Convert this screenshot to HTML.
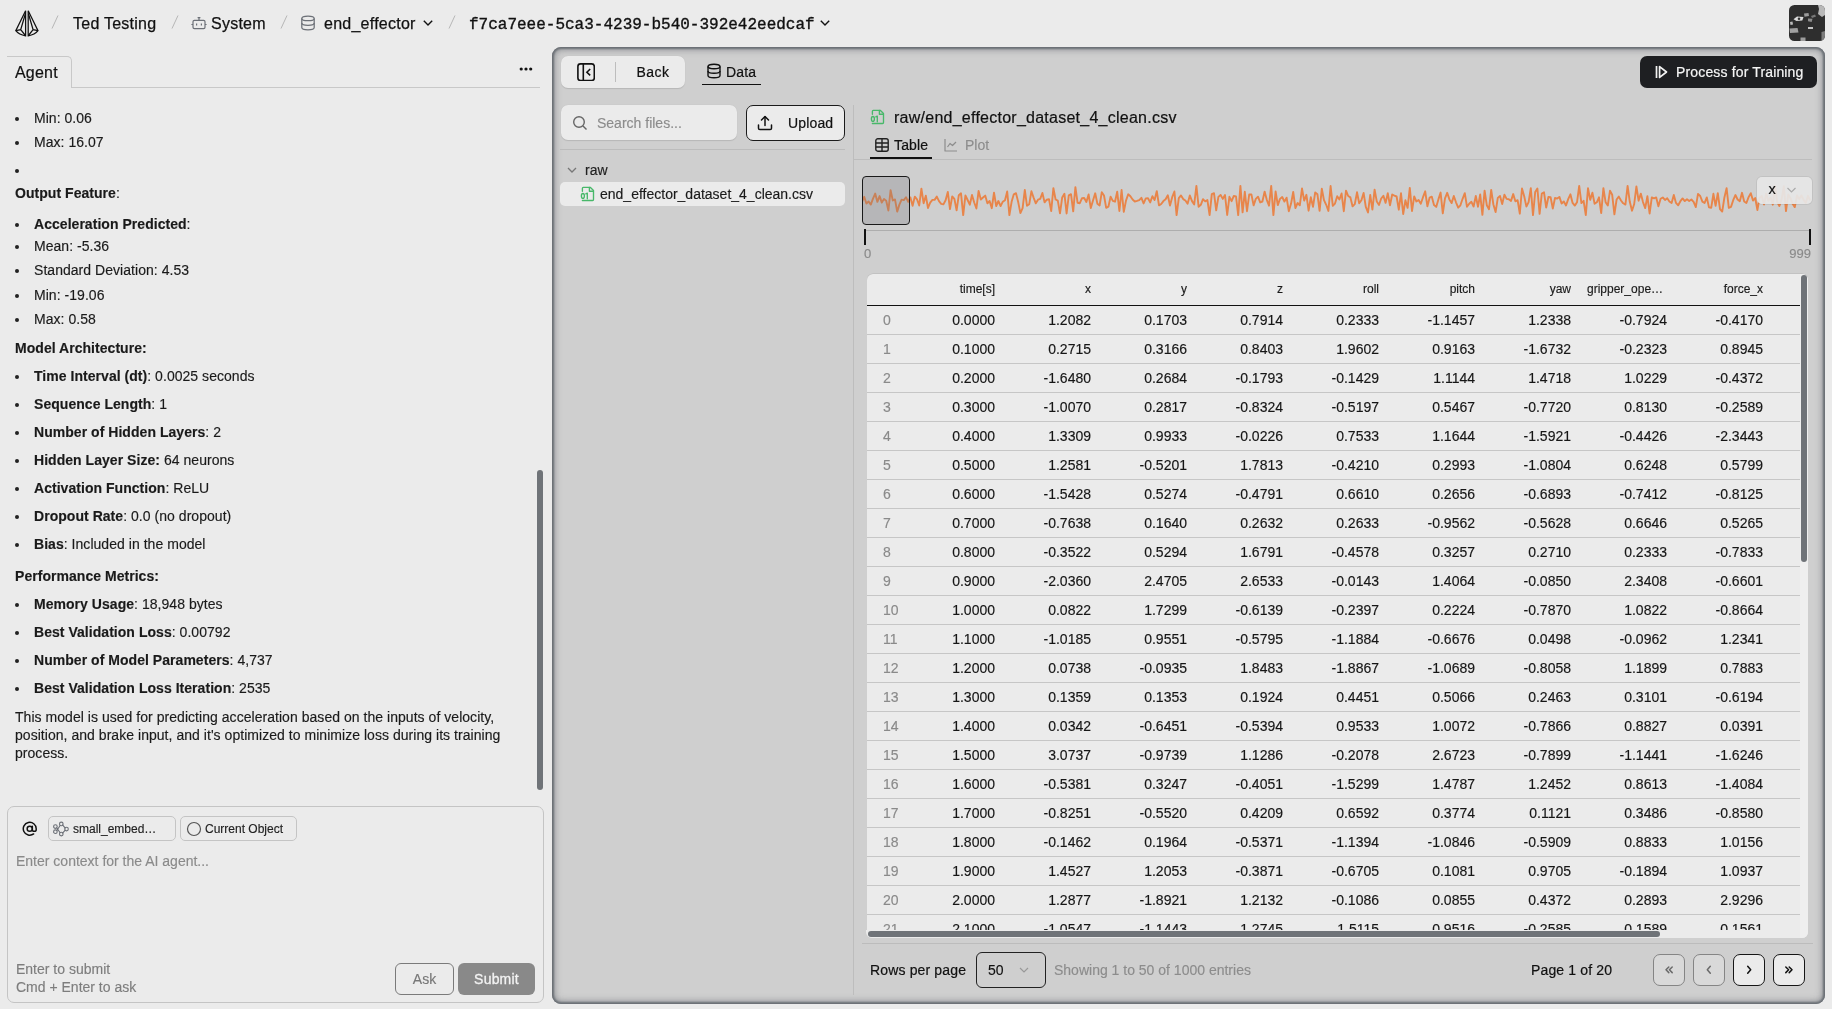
<!DOCTYPE html>
<html><head><meta charset="utf-8">
<style>
*{box-sizing:border-box;margin:0;padding:0}
html,body{width:1832px;height:1009px;overflow:hidden;background:#ebebeb;font-family:"Liberation Sans",sans-serif;color:#111;}
.abs{position:absolute}
.mono{font-family:"Liberation Mono",monospace}
/* top bar */
#top{position:absolute;left:0;top:0;width:1832px;height:47px}
.crumb{position:absolute;top:14px;font-size:16px;line-height:20px;color:#111;white-space:nowrap}
.slash{position:absolute;top:13px;font-size:16px;line-height:20px;color:#bbb}
.med{letter-spacing:0.25px;-webkit-text-stroke:0.25px currentColor}
/* left panel */
#left{position:absolute;left:0;top:47px;width:552px;height:962px}
#agentTab{position:absolute;left:7px;top:8.5px;width:65px;height:32px;border-top:1px solid #c8c8c8;border-right:1px solid #c8c8c8;border-radius:0 5px 0 0;background:#ebebeb}
#agentTab span{position:absolute;left:8px;top:6px;font-size:16px;line-height:20px;letter-spacing:0.2px;-webkit-text-stroke:0.2px #111}
#tabLine{position:absolute;left:71px;top:40px;width:469px;height:1px;background:#c8c8c8}
#content{position:absolute;left:0;top:47px;width:540px;font-size:14px;line-height:20px;color:#1a1a1a;letter-spacing:0.04px}
.li{position:absolute;left:34px;white-space:nowrap}
.li:before{content:"";position:absolute;left:-19px;top:9px;width:4px;height:4px;border-radius:50%;background:#222}
.p{position:absolute;left:15px;white-space:nowrap}
b{font-weight:700}
#chat{position:absolute;left:7px;top:759px;width:537px;height:197px;border:1px solid #c4c4c4;border-radius:7px}
.chip{position:absolute;top:9px;height:25px;border:1px solid #c4c4c4;border-radius:5px}
.chip span{position:absolute;top:5px;font-size:12px;line-height:14px;color:#222;white-space:nowrap}
/* right panel */
#right{position:absolute;left:552px;top:47px;width:1273px;height:957px;border-radius:9px;background:#cfcfcf;box-shadow:inset 0 0 0 1px rgba(100,105,112,.6),inset 0 0 0 2px rgba(100,105,112,.5),inset 0 0 0 3px rgba(100,105,112,.2),inset 0 0 5px 3px rgba(100,105,112,.4),inset 0 0 10px 1px rgba(80,84,90,.3)}
.t14m{font-size:14px;line-height:20px;color:#111;white-space:nowrap;letter-spacing:0.15px;-webkit-text-stroke:0.2px currentColor}
#tbl{background:#ebebeb;border-radius:6px;overflow:hidden;box-shadow:0 -0.5px 0.5px rgba(0,0,0,.12)}
.hd{font-size:12px;line-height:16px;color:#1a1a1a;white-space:nowrap}
.ix{font-size:14px;line-height:20px;color:#8a8a8a}
.cv{font-size:14px;line-height:20px;color:#161616;white-space:nowrap}
</style></head><body><div id="wrap" style="position:absolute;left:0;top:0;width:1832px;height:1009px;will-change:transform;-webkit-text-stroke-width:0.15px">
<div id="top">
  <svg class="abs" style="left:10px;top:6px" width="36" height="36" viewBox="0 0 36 36">
    <g fill="none" stroke="#111" stroke-width="1.25" stroke-linejoin="miter">
      <path d="M15.6 4.8 L5.8 24.6 Q9 28.6 15.6 29.8 Z"/>
      <path d="M15.3 8 L10.7 23.6 L5.8 24.6 M10.7 23.6 L15.4 29.5"/>
      <path d="M18.2 4.8 L28 24.6 Q24.8 28.6 18.2 29.8 Z"/>
      <path d="M18.5 8 L23.1 23.6 L28 24.6 M23.1 23.6 L18.4 29.5"/>
    </g>
  </svg>
  <svg class="abs" style="left:50px;top:14px" width="10" height="16" viewBox="0 0 10 16"><path d="M2 14.5L8 1.5" stroke="#b0b0b0" stroke-width="0.9"/></svg>
  <span class="crumb med" style="left:73px">Ted Testing</span>
  <svg class="abs" style="left:170px;top:14px" width="10" height="16" viewBox="0 0 10 16"><path d="M2 14.5L8 1.5" stroke="#b0b0b0" stroke-width="0.9"/></svg>
  <svg class="abs" style="left:190px;top:15px" width="18" height="16" viewBox="0 0 18 16"><g fill="none" stroke="#6c7077" stroke-width="1.2" stroke-linejoin="round"><rect x="3" y="5.4" width="12" height="8.2" rx="1.4"/><path d="M9 5.4V2.6M7.6 2.6h2.8"/><path d="M1.4 9.5h1.6M15 9.5h1.6"/><path d="M6.6 8.4v2.1M11.4 8.4v2.1"/></g></svg>
  <span class="crumb med" style="left:211px">System</span>
  <svg class="abs" style="left:279px;top:14px" width="10" height="16" viewBox="0 0 10 16"><path d="M2 14.5L8 1.5" stroke="#b0b0b0" stroke-width="0.9"/></svg>
  <svg class="abs" style="left:300px;top:15px" width="16" height="16" viewBox="0 0 16 16"><g fill="none" stroke="#6c7077" stroke-width="1.25"><ellipse cx="8" cy="3.4" rx="6.2" ry="2.3"/><path d="M1.8 3.4v9.2c0 1.3 2.8 2.3 6.2 2.3s6.2-1 6.2-2.3V3.4"/><path d="M1.8 8c0 1.3 2.8 2.3 6.2 2.3s6.2-1 6.2-2.3"/></g></svg>
  <span class="crumb med" style="left:324px">end_effector</span>
  <svg class="abs" style="left:422px;top:19px" width="12" height="8" viewBox="0 0 12 8"><path d="M1.8 1.8L6 6l4.2-4.2" fill="none" stroke="#111" stroke-width="1.4"/></svg>
  <svg class="abs" style="left:447px;top:14px" width="10" height="16" viewBox="0 0 10 16"><path d="M2 14.5L8 1.5" stroke="#b0b0b0" stroke-width="0.9"/></svg>
  <span class="crumb mono" style="left:469px;top:15px;-webkit-text-stroke:0.35px #111">f7ca7eee-5ca3-4239-b540-392e42eedcaf</span>
  <svg class="abs" style="left:819px;top:19px" width="12" height="8" viewBox="0 0 12 8"><path d="M1.8 1.8L6 6l4.2-4.2" fill="none" stroke="#111" stroke-width="1.4"/></svg>
  <svg class="abs" style="left:1789px;top:5px" width="36" height="36" viewBox="0 0 36 36">
    <defs><clipPath id="av"><rect x="0" y="0" width="36" height="36" rx="5.5"/></clipPath></defs>
    <g clip-path="url(#av)">
      <rect width="36" height="36" fill="#2e2e2e"/>
      <path d="M29 0h7v10l-3 2-4-3 1-5z" fill="#b8b8b8"/>
      <path d="M4.5 14.2l3.5-2.6 6.5 0.4-1.2 3.6-5.8 0.4z" fill="#dcdcdc"/>
      <circle cx="10" cy="13.8" r="1.3" fill="#333"/>
      <path d="M15 8.5l4.5-0.5 0.5 3-4.5 0.8z" fill="#9a9a9a"/>
      <path d="M19 13.5l4.5 0.3-0.8 3.2-3.7-0.8z" fill="#8c8c8c"/>
      <path d="M19 22h5v2h-5z" fill="#c4c4c4"/>
      <path d="M0.5 23.5l8-0.5 1 4.5-8.5 0.5z" fill="#a0a0a0"/>
      <path d="M11.5 32.5h5v3.5h-5z" fill="#9c9c9c"/>
      <path d="M32.5 27l3.5-1v10h-3.5z" fill="#7c7c7c"/>
      <path d="M1 17l2.5-0.5 0.5 3-2.5 0.5z" fill="#bdbdbd"/>
      <path d="M22 11l4-1.5 1 2-4 1.5z" fill="#777"/>
    </g>
  </svg>
</div>

<div id="left">
  <div id="agentTab"><span>Agent</span></div>
  <div id="tabLine"></div>
  <svg class="abs" style="left:517px;top:19px" width="18" height="6" viewBox="0 0 18 6"><g fill="#111"><circle cx="4.2" cy="3" r="1.6"/><circle cx="9" cy="3" r="1.6"/><circle cx="13.7" cy="3" r="1.6"/></g></svg>
  
  <div class="abs" style="left:537px;top:423px;width:6px;height:320px;border-radius:3px;background:#6f7378"></div>
  <div id="chat">
    <svg class="abs" style="left:14.2px;top:14px" width="15.5" height="15.5" viewBox="0 0 24 24"><g fill="none" stroke="#111" stroke-width="2.3" stroke-linecap="round" stroke-linejoin="round"><circle cx="12" cy="12" r="4"/><path d="M16 8v5a3 3 0 0 0 6 0v-1a10 10 0 1 0-4 8"/></g></svg>
    <div class="chip" style="left:40px;width:128px"><svg class="abs" style="left:3px;top:3px" width="17" height="17" viewBox="0 0 17 17"><g fill="none" stroke="#6c7077" stroke-width="1.1"><path d="M4.5 7.5L8.3 13M4.5 11L8.3 5.2M10.3 4.6l3.2 3.8M10.3 13.4l3.2-3.6"/><circle cx="9.3" cy="3.9" r="1.8"/><circle cx="14.5" cy="9.1" r="1.8"/><circle cx="9.3" cy="14.1" r="1.8"/><circle cx="3.4" cy="6.6" r="1.8"/><circle cx="3.4" cy="11.7" r="1.8"/></g></svg><span style="left:24px">small_embed…</span></div>
    <div class="chip" style="left:172px;width:117px"><svg class="abs" style="left:5px;top:4px" width="16" height="16" viewBox="0 0 16 16"><circle cx="8" cy="8" r="6.5" fill="none" stroke="#555" stroke-width="1.2"/></svg><span style="left:24px">Current Object</span></div>
    <div class="abs" style="left:8px;top:44px;font-size:14px;line-height:20px;color:#8a8a8a">Enter context for the AI agent...</div>
    <div class="abs" style="left:8px;top:153px;font-size:14px;line-height:18px;color:#7d7d7d">Enter to submit<br>Cmd + Enter to ask</div>
    <div class="abs" style="left:387px;top:156px;width:59px;height:32px;border:1px solid #7a7a7a;border-radius:6px;font-size:14px;line-height:30px;text-align:center;color:#777">Ask</div>
    <div class="abs" style="left:450px;top:156px;width:77px;height:32px;border-radius:6px;background:#898989;font-size:14px;line-height:32px;text-align:center;color:#f3f3f3;letter-spacing:0.2px;-webkit-text-stroke:0.3px #f3f3f3">Submit</div>
  </div>
<div id="content">
<div class="li" style="top:14px">Min: 0.06</div>
<div class="li" style="top:38px">Max: 16.07</div>
<div class="li" style="top:66px"></div>
<div class="p" style="top:89px"><b>Output Feature</b>:</div>
<div class="li" style="top:120px"><b>Acceleration Predicted</b>:</div>
<div class="li" style="top:142px">Mean: -5.36</div>
<div class="li" style="top:166px">Standard Deviation: 4.53</div>
<div class="li" style="top:190.5px">Min: -19.06</div>
<div class="li" style="top:214.5px">Max: 0.58</div>
<div class="p" style="top:244px"><b>Model Architecture:</b></div>
<div class="li" style="top:272px"><b>Time Interval (dt)</b>: 0.0025 seconds</div>
<div class="li" style="top:300px"><b>Sequence Length</b>: 1</div>
<div class="li" style="top:328px"><b>Number of Hidden Layers</b>: 2</div>
<div class="li" style="top:356px"><b>Hidden Layer Size:</b> 64 neurons</div>
<div class="li" style="top:384px"><b>Activation Function</b>: ReLU</div>
<div class="li" style="top:412px"><b>Dropout Rate</b>: 0.0 (no dropout)</div>
<div class="li" style="top:440px"><b>Bias</b>: Included in the model</div>
<div class="p" style="top:472px"><b>Performance Metrics:</b></div>
<div class="li" style="top:500px"><b>Memory Usage</b>: 18,948 bytes</div>
<div class="li" style="top:528px"><b>Best Validation Loss</b>: 0.00792</div>
<div class="li" style="top:556px"><b>Number of Model Parameters</b>: 4,737</div>
<div class="li" style="top:584px"><b>Best Validation Loss Iteration</b>: 2535</div>
<div class="p" style="top:613px">This model is used for predicting acceleration based on the inputs of velocity,</div>
<div class="p" style="top:631px">position, and brake input, and it's optimized to minimize loss during its training</div>
<div class="p" style="top:649px">process.</div>
  </div>
</div>

<div id="right">
<div class="abs" style="left:9px;top:9px;width:124px;height:32px;border-radius:7px;background:#ebebeb;box-shadow:0 0.5px 1px rgba(0,0,0,.12)"></div>
<svg class="abs" style="left:25px;top:16px" width="18" height="18" viewBox="0 0 18 18"><g fill="none" stroke="#111" stroke-width="1.6"><rect x="0.9" y="0.9" width="16.4" height="16.6" rx="2.6"/><path d="M6.3 1v16.4"/><path d="M13.2 6L9.9 9.2l3.3 3.2"/></g></svg>
<div class="abs" style="left:63px;top:15px;width:1px;height:20px;background:#bdbdbd"></div>
<div class="abs t14m" style="left:84.5px;top:15px;letter-spacing:0.45px">Back</div>
<svg class="abs" style="left:154px;top:16px" width="16" height="16" viewBox="0 0 16 16"><g fill="none" stroke="#111" stroke-width="1.4"><ellipse cx="8" cy="3.5" rx="6" ry="2.3"/><path d="M2 3.5v9c0 1.3 2.7 2.3 6 2.3s6-1 6-2.3v-9"/><path d="M2 8c0 1.3 2.7 2.3 6 2.3s6-1 6-2.3"/></g></svg>
<div class="abs t14m" style="left:174px;top:15px">Data</div>
<div class="abs" style="left:150px;top:36.599999999999994px;width:59px;height:1.3px;background:#111"></div>
<div class="abs" style="left:1088px;top:9px;width:177px;height:32px;border-radius:7px;background:#1e1f22"></div>
<svg class="abs" style="left:1103px;top:18px" width="13" height="14" viewBox="0 0 13 14"><g fill="none" stroke="#f2f2f2" stroke-width="1.7" stroke-linejoin="round"><path d="M1.5 1v12"/><path d="M4.6 1.6L11.5 7L4.6 12.4Z"/></g></svg>
<div class="abs t14m" style="left:1124px;top:15px;color:#f5f5f5">Process for Training</div>

<div class="abs" style="left:9px;top:58px;width:176px;height:35px;border-radius:7px;background:#ebebeb;box-shadow:0 0.5px 1px rgba(0,0,0,.12)"></div>
<svg class="abs" style="left:20px;top:68px" width="16" height="16" viewBox="0 0 16 16"><g fill="none" stroke="#666" stroke-width="1.4"><circle cx="7" cy="7" r="5.3"/><path d="M11 11l3.5 3.5"/></g></svg>
<div class="abs" style="left:45px;top:66px;font-size:14px;line-height:20px;color:#8c8c8c">Search files...</div>
<div class="abs" style="left:194px;top:58px;width:99px;height:36px;border-radius:7px;border:1px solid #1b1b1b;background:#ebebeb"></div>
<svg class="abs" style="left:205px;top:68px" width="16" height="16" viewBox="0 0 16 16"><g fill="none" stroke="#111" stroke-width="1.5" stroke-linecap="round" stroke-linejoin="round"><path d="M1.5 10v3.2c0 .8.6 1.3 1.3 1.3h10.4c.7 0 1.3-.5 1.3-1.3V10"/><path d="M8 10.5V1.8"/><path d="M4.5 5L8 1.5L11.5 5"/></g></svg>
<div class="abs t14m" style="left:236px;top:66px">Upload</div>
<div class="abs" style="left:8px;top:102px;width:285px;height:1px;background:#bcbcbc"></div>
<svg class="abs" style="left:14px;top:118px" width="12" height="10" viewBox="0 0 12 10"><path d="M2 3l4 4 4-4" fill="none" stroke="#777" stroke-width="1.3"/></svg>
<div class="abs" style="left:33px;top:113px;font-size:14px;line-height:20px;color:#222">raw</div>
<div class="abs" style="left:8px;top:135px;width:285px;height:24px;border-radius:5px;background:#ebebeb"></div>

<svg class="abs" style="left:28px;top:139px" width="15" height="16" viewBox="0 0 15 16"><g fill="none" stroke="#48b86a" stroke-width="1.35" stroke-linejoin="round" stroke-linecap="round"><path d="M2.4 5.2V2.2c0-.5.4-.9.9-.9h6.9l3.3 3.3v9c0 .5-.4.9-.9.9H2.4"/><path d="M9.4 1.4v3.8h3.9"/><ellipse cx="2.9" cy="9.9" rx="1.5" ry="2.4"/><path d="M5.8 7.9l1.5-.8v5.6"/></g></svg>
<div class="abs" style="left:48px;top:137px;font-size:14px;line-height:20px;color:#1a1a1a">end_effector_dataset_4_clean.csv</div>
<div class="abs" style="left:301px;top:58px;width:1px;height:890px;background:#bdbdbd"></div>
<svg class="abs" style="left:318px;top:62px" width="15" height="16" viewBox="0 0 15 16"><g fill="none" stroke="#48b86a" stroke-width="1.35" stroke-linejoin="round" stroke-linecap="round"><path d="M2.4 5.2V2.2c0-.5.4-.9.9-.9h6.9l3.3 3.3v9c0 .5-.4.9-.9.9H2.4"/><path d="M9.4 1.4v3.8h3.9"/><ellipse cx="2.9" cy="9.9" rx="1.5" ry="2.4"/><path d="M5.8 7.9l1.5-.8v5.6"/></g></svg>
<div class="abs" style="left:342px;top:61px;font-size:16px;line-height:20px;color:#111;letter-spacing:0.25px;-webkit-text-stroke:0.2px #111">raw/end_effector_dataset_4_clean.csv</div>
<svg class="abs" style="left:323px;top:91px" width="14" height="14" viewBox="0 0 14 14"><g fill="none" stroke="#222" stroke-width="1.4"><rect x="0.8" y="0.8" width="12.4" height="12.4" rx="2"/><path d="M0.8 5h12.4M0.8 9h12.4M7 0.8v12.4"/></g></svg>
<div class="abs t14m" style="left:342px;top:88px">Table</div>
<svg class="abs" style="left:392px;top:91px" width="14" height="14" viewBox="0 0 14 14"><g fill="none" stroke="#8d8d8d" stroke-width="1.2" stroke-linejoin="round"><path d="M1 1v12h12"/><path d="M3.5 9L6 5.5l2.5 2L12 4"/></g></svg>
<div class="abs" style="left:413px;top:88px;font-size:14px;line-height:20px;color:#8d8d8d">Plot</div>
<div class="abs" style="left:318px;top:110.30000000000001px;width:62px;height:1.7px;background:#111"></div>
<div class="abs" style="left:302px;top:112px;width:958px;height:1px;background:#bdbdbd"></div>

<svg class="abs" style="left:310px;top:123px" width="950" height="60" viewBox="0 0 950 60"><path d="M0.0 31.9 L2.2 26.8 L4.4 33.5 L6.6 31.5 L8.8 34.6 L11.0 28.6 L13.2 23.6 L15.4 31.9 L17.6 26.1 L19.8 32.6 L22.0 29.1 L24.2 30.8 L26.4 40.5 L28.6 20.1 L30.8 30.5 L33.0 29.4 L35.2 41.6 L37.4 34.6 L39.6 29.6 L41.8 30.1 L44.0 27.2 L46.2 31.8 L48.4 27.4 L50.6 35.8 L52.8 26.6 L55.0 29.3 L57.2 35.5 L59.4 18.7 L61.6 33.2 L63.8 25.7 L66.0 38.0 L68.2 32.6 L70.4 29.9 L72.6 29.9 L74.8 26.6 L77.0 31.2 L79.2 33.8 L81.4 34.4 L83.6 30.2 L85.8 21.9 L88.0 39.1 L90.2 26.4 L92.4 28.9 L94.6 40.3 L96.8 25.2 L99.0 23.3 L101.2 45.1 L103.4 25.5 L105.6 30.0 L107.8 34.7 L110.0 25.0 L112.2 32.5 L114.4 38.5 L116.6 20.9 L118.8 29.5 L121.0 27.5 L123.2 25.6 L125.4 33.3 L127.6 31.0 L129.8 38.2 L132.0 22.7 L134.2 36.0 L136.4 31.0 L138.6 36.1 L140.8 31.7 L143.0 30.2 L145.2 21.5 L147.4 45.1 L149.6 31.8 L151.8 24.3 L154.0 23.2 L156.2 32.1 L158.4 43.1 L160.6 38.2 L162.8 20.0 L165.0 35.8 L167.2 34.3 L169.4 21.3 L171.6 27.6 L173.8 33.3 L176.0 29.7 L178.2 28.9 L180.4 23.0 L182.6 32.4 L184.8 29.7 L187.0 29.2 L189.2 41.1 L191.4 18.1 L193.6 29.5 L195.8 30.7 L198.0 43.3 L200.2 27.4 L202.4 23.7 L204.6 43.5 L206.8 25.4 L209.0 24.2 L211.2 41.3 L213.4 17.1 L215.6 32.8 L217.8 33.2 L220.0 28.2 L222.2 28.0 L224.4 32.0 L226.6 24.5 L228.8 38.1 L231.0 30.6 L233.2 23.3 L235.4 33.8 L237.6 35.5 L239.8 22.2 L242.0 25.5 L244.2 37.9 L246.4 36.7 L248.6 26.6 L250.8 30.9 L253.0 31.7 L255.2 21.6 L257.4 41.0 L259.6 20.0 L261.8 41.8 L264.0 30.6 L266.2 24.3 L268.4 26.3 L270.6 29.5 L272.8 31.5 L275.0 30.9 L277.2 30.1 L279.4 27.8 L281.6 33.4 L283.8 28.4 L286.0 28.2 L288.2 32.4 L290.4 26.2 L292.6 29.9 L294.8 21.1 L297.0 35.4 L299.2 34.0 L301.4 31.1 L303.6 29.3 L305.8 25.3 L308.0 35.5 L310.2 27.2 L312.4 21.5 L314.6 45.1 L316.8 28.2 L319.0 25.4 L321.2 29.1 L323.4 30.5 L325.6 33.7 L327.8 25.4 L330.0 31.1 L332.2 34.4 L334.4 15.9 L336.6 36.7 L338.8 34.8 L341.0 29.2 L343.2 31.4 L345.4 30.1 L347.6 45.1 L349.8 24.1 L352.0 23.2 L354.2 40.4 L356.4 26.9 L358.6 24.9 L360.8 28.9 L363.0 25.0 L365.2 45.0 L367.4 26.8 L369.6 31.2 L371.8 25.9 L374.0 26.5 L376.2 45.1 L378.4 15.9 L380.6 42.3 L382.8 21.8 L385.0 41.2 L387.2 24.5 L389.4 24.4 L391.6 35.4 L393.8 28.9 L396.0 26.7 L398.2 32.4 L400.4 31.5 L402.6 21.6 L404.8 29.8 L407.0 35.7 L409.2 15.9 L411.4 45.1 L413.6 21.5 L415.8 35.1 L418.0 28.9 L420.2 27.0 L422.4 31.6 L424.6 27.7 L426.8 41.2 L429.0 33.8 L431.2 22.0 L433.4 38.0 L435.6 33.0 L437.8 35.3 L440.0 18.5 L442.2 30.6 L444.4 24.8 L446.6 40.7 L448.8 27.3 L451.0 36.9 L453.2 22.4 L455.4 24.2 L457.6 40.8 L459.8 18.8 L462.0 30.2 L464.2 34.8 L466.4 40.9 L468.6 16.0 L470.8 35.8 L473.0 33.6 L475.2 26.2 L477.4 29.5 L479.6 23.5 L481.8 41.2 L484.0 20.7 L486.2 26.0 L488.4 27.4 L490.6 36.4 L492.8 34.1 L495.0 22.3 L497.2 33.3 L499.4 30.2 L501.6 22.9 L503.8 36.8 L506.0 42.5 L508.2 25.0 L510.4 39.6 L512.6 19.7 L514.8 31.5 L517.0 35.0 L519.2 28.5 L521.4 25.8 L523.6 32.9 L525.8 23.3 L528.0 35.3 L530.2 24.5 L532.4 25.6 L534.6 26.5 L536.8 39.7 L539.0 23.3 L541.2 44.0 L543.4 30.3 L545.6 37.9 L547.8 17.9 L550.0 41.0 L552.2 26.4 L554.4 31.5 L556.6 30.0 L558.8 33.7 L561.0 27.2 L563.2 21.3 L565.4 36.3 L567.6 27.7 L569.8 26.7 L572.0 35.0 L574.2 36.9 L576.4 29.4 L578.6 22.6 L580.8 43.3 L583.0 28.3 L585.2 22.8 L587.4 29.4 L589.6 33.1 L591.8 26.0 L594.0 32.3 L596.2 37.7 L598.4 35.3 L600.6 28.8 L602.8 23.2 L605.0 36.8 L607.2 33.7 L609.4 31.8 L611.6 36.5 L613.8 26.0 L616.0 36.7 L618.2 24.5 L620.4 44.9 L622.6 20.7 L624.8 35.2 L627.0 39.2 L629.2 19.9 L631.4 34.5 L633.6 42.1 L635.8 27.9 L638.0 25.9 L640.2 34.0 L642.4 24.6 L644.6 28.9 L646.8 29.3 L649.0 30.9 L651.2 24.1 L653.4 31.3 L655.6 30.2 L657.8 43.7 L660.0 18.5 L662.2 26.2 L664.4 36.6 L666.6 32.1 L668.8 18.1 L671.0 45.1 L673.2 22.0 L675.4 18.5 L677.6 43.8 L679.8 23.5 L682.0 22.3 L684.2 37.5 L686.4 27.0 L688.6 27.3 L690.8 38.6 L693.0 28.0 L695.2 28.6 L697.4 26.9 L699.6 33.5 L701.8 31.5 L704.0 35.5 L706.2 29.1 L708.4 24.3 L710.6 32.9 L712.8 35.6 L715.0 32.3 L717.2 15.9 L719.4 33.1 L721.6 30.8 L723.8 45.1 L726.0 18.3 L728.2 29.9 L730.4 22.7 L732.6 33.8 L734.8 32.3 L737.0 27.3 L739.2 43.1 L741.4 18.2 L743.6 32.2 L745.8 35.5 L748.0 20.7 L750.2 24.8 L752.4 44.4 L754.6 29.5 L756.8 26.6 L759.0 30.5 L761.2 33.3 L763.4 34.6 L765.6 15.9 L767.8 31.8 L770.0 40.7 L772.2 34.0 L774.4 16.4 L776.6 30.7 L778.8 23.6 L781.0 32.1 L783.2 38.1 L785.4 26.1 L787.6 43.5 L789.8 27.4 L792.0 28.3 L794.2 27.4 L796.4 36.3 L798.6 28.8 L800.8 27.5 L803.0 29.9 L805.2 28.2 L807.4 31.5 L809.6 33.0 L811.8 25.0 L814.0 32.9 L816.2 35.3 L818.4 31.2 L820.6 28.4 L822.8 31.1 L825.0 29.3 L827.2 31.0 L829.4 29.5 L831.6 31.8 L833.8 37.1 L836.0 23.9 L838.2 26.0 L840.4 31.6 L842.6 33.0 L844.8 27.4 L847.0 37.4 L849.2 37.9 L851.4 23.8 L853.6 35.9 L855.8 23.2 L858.0 39.1 L860.2 41.6 L862.4 27.5 L864.6 18.2 L866.8 37.9 L869.0 36.9 L871.2 30.2 L873.4 25.0 L875.6 29.5 L877.8 31.2 L880.0 22.8 L882.2 31.5 L884.4 33.0 L886.6 27.1 L888.8 23.2 L891.0 30.6 L893.2 28.0 L895.4 40.0 L897.6 27.7 L899.8 25.9 L902.0 34.6 L904.2 23.5 L906.4 30.8 L908.6 27.4 L910.8 34.7 L913.0 15.9 L915.2 32.1 L917.4 35.9 L919.6 29.3 L921.8 16.3 L924.0 41.1 L926.2 24.5 L928.4 27.9 L930.6 33.8 L932.8 37.1 L935.0 25.5 L937.2 29.1 L939.4 25.4 L941.6 29.9 L943.8 33.0 L946.0 25.8 L948.2 30.3" fill="none" stroke="#e8854a" stroke-width="1.9" stroke-linejoin="round"/></svg>
<div class="abs" style="left:310px;top:129px;width:48px;height:49px;border:1px solid #1a1a1a;border-radius:4px;background:rgba(120,120,125,.28)"></div>
<div class="abs" style="left:1205px;top:130px;width:55px;height:27px;border-radius:5px;background:rgba(230,230,230,.93);box-shadow:0 0 0 1px rgba(0,0,0,.06)"></div>
<div class="abs" style="left:1216.5px;top:134px;font-size:14.5px;line-height:16px;color:#111">x</div>
<svg class="abs" style="left:1234px;top:139px" width="11" height="8" viewBox="0 0 11 8"><path d="M1.5 2l4 4 4-4" fill="none" stroke="#aaa" stroke-width="1.2"/></svg>
<div class="abs" style="left:312px;top:183px;width:946px;height:1px;background:#aeaeae"></div>
<div class="abs" style="left:312px;top:182px;width:2px;height:16px;background:#111"></div>
<div class="abs" style="left:1257px;top:182px;width:2px;height:16px;background:#111"></div>
<div class="abs" style="left:312px;top:199px;font-size:13px;line-height:16px;color:#8a8a8a">0</div>
<div class="abs" style="right:14px;top:199px;font-size:13px;line-height:16px;color:#8a8a8a">999</div>

<div class="abs" id="tbl" style="left:315px;top:227px;width:941px;height:664px">
<div class="abs" style="left:0;top:0;width:933px;height:32px"></div>
<div class="abs hd" style="right:813px;top:6.5px">time[s]</div>
<div class="abs hd" style="right:717px;top:6.5px">x</div>
<div class="abs hd" style="right:621px;top:6.5px">y</div>
<div class="abs hd" style="right:525px;top:6.5px">z</div>
<div class="abs hd" style="right:429px;top:6.5px">roll</div>
<div class="abs hd" style="right:333px;top:6.5px">pitch</div>
<div class="abs hd" style="right:237px;top:6.5px">yaw</div>
<div class="abs hd" style="left:720px;top:6.5px">gripper_ope…</div>
<div class="abs hd" style="right:45px;top:6.5px">force_x</div>
<div class="abs" style="left:0;top:31px;width:933px;height:1.2px;background:#111"></div>
<div class="abs" style="left:0;top:60px;width:933px;height:1px;background:#c6c6c6"></div>
<div class="abs ix" style="left:16px;top:36px">0</div>
<div class="abs cv" style="right:813px;top:36px">0.0000</div>
<div class="abs cv" style="right:717px;top:36px">1.2082</div>
<div class="abs cv" style="right:621px;top:36px">0.1703</div>
<div class="abs cv" style="right:525px;top:36px">0.7914</div>
<div class="abs cv" style="right:429px;top:36px">0.2333</div>
<div class="abs cv" style="right:333px;top:36px">-1.1457</div>
<div class="abs cv" style="right:237px;top:36px">1.2338</div>
<div class="abs cv" style="right:141px;top:36px">-0.7924</div>
<div class="abs cv" style="right:45px;top:36px">-0.4170</div>
<div class="abs" style="left:0;top:89px;width:933px;height:1px;background:#c6c6c6"></div>
<div class="abs ix" style="left:16px;top:65px">1</div>
<div class="abs cv" style="right:813px;top:65px">0.1000</div>
<div class="abs cv" style="right:717px;top:65px">0.2715</div>
<div class="abs cv" style="right:621px;top:65px">0.3166</div>
<div class="abs cv" style="right:525px;top:65px">0.8403</div>
<div class="abs cv" style="right:429px;top:65px">1.9602</div>
<div class="abs cv" style="right:333px;top:65px">0.9163</div>
<div class="abs cv" style="right:237px;top:65px">-1.6732</div>
<div class="abs cv" style="right:141px;top:65px">-0.2323</div>
<div class="abs cv" style="right:45px;top:65px">0.8945</div>
<div class="abs" style="left:0;top:118px;width:933px;height:1px;background:#c6c6c6"></div>
<div class="abs ix" style="left:16px;top:94px">2</div>
<div class="abs cv" style="right:813px;top:94px">0.2000</div>
<div class="abs cv" style="right:717px;top:94px">-1.6480</div>
<div class="abs cv" style="right:621px;top:94px">0.2684</div>
<div class="abs cv" style="right:525px;top:94px">-0.1793</div>
<div class="abs cv" style="right:429px;top:94px">-0.1429</div>
<div class="abs cv" style="right:333px;top:94px">1.1144</div>
<div class="abs cv" style="right:237px;top:94px">1.4718</div>
<div class="abs cv" style="right:141px;top:94px">1.0229</div>
<div class="abs cv" style="right:45px;top:94px">-0.4372</div>
<div class="abs" style="left:0;top:147px;width:933px;height:1px;background:#c6c6c6"></div>
<div class="abs ix" style="left:16px;top:123px">3</div>
<div class="abs cv" style="right:813px;top:123px">0.3000</div>
<div class="abs cv" style="right:717px;top:123px">-1.0070</div>
<div class="abs cv" style="right:621px;top:123px">0.2817</div>
<div class="abs cv" style="right:525px;top:123px">-0.8324</div>
<div class="abs cv" style="right:429px;top:123px">-0.5197</div>
<div class="abs cv" style="right:333px;top:123px">0.5467</div>
<div class="abs cv" style="right:237px;top:123px">-0.7720</div>
<div class="abs cv" style="right:141px;top:123px">0.8130</div>
<div class="abs cv" style="right:45px;top:123px">-0.2589</div>
<div class="abs" style="left:0;top:176px;width:933px;height:1px;background:#c6c6c6"></div>
<div class="abs ix" style="left:16px;top:152px">4</div>
<div class="abs cv" style="right:813px;top:152px">0.4000</div>
<div class="abs cv" style="right:717px;top:152px">1.3309</div>
<div class="abs cv" style="right:621px;top:152px">0.9933</div>
<div class="abs cv" style="right:525px;top:152px">-0.0226</div>
<div class="abs cv" style="right:429px;top:152px">0.7533</div>
<div class="abs cv" style="right:333px;top:152px">1.1644</div>
<div class="abs cv" style="right:237px;top:152px">-1.5921</div>
<div class="abs cv" style="right:141px;top:152px">-0.4426</div>
<div class="abs cv" style="right:45px;top:152px">-2.3443</div>
<div class="abs" style="left:0;top:205px;width:933px;height:1px;background:#c6c6c6"></div>
<div class="abs ix" style="left:16px;top:181px">5</div>
<div class="abs cv" style="right:813px;top:181px">0.5000</div>
<div class="abs cv" style="right:717px;top:181px">1.2581</div>
<div class="abs cv" style="right:621px;top:181px">-0.5201</div>
<div class="abs cv" style="right:525px;top:181px">1.7813</div>
<div class="abs cv" style="right:429px;top:181px">-0.4210</div>
<div class="abs cv" style="right:333px;top:181px">0.2993</div>
<div class="abs cv" style="right:237px;top:181px">-1.0804</div>
<div class="abs cv" style="right:141px;top:181px">0.6248</div>
<div class="abs cv" style="right:45px;top:181px">0.5799</div>
<div class="abs" style="left:0;top:234px;width:933px;height:1px;background:#c6c6c6"></div>
<div class="abs ix" style="left:16px;top:210px">6</div>
<div class="abs cv" style="right:813px;top:210px">0.6000</div>
<div class="abs cv" style="right:717px;top:210px">-1.5428</div>
<div class="abs cv" style="right:621px;top:210px">0.5274</div>
<div class="abs cv" style="right:525px;top:210px">-0.4791</div>
<div class="abs cv" style="right:429px;top:210px">0.6610</div>
<div class="abs cv" style="right:333px;top:210px">0.2656</div>
<div class="abs cv" style="right:237px;top:210px">-0.6893</div>
<div class="abs cv" style="right:141px;top:210px">-0.7412</div>
<div class="abs cv" style="right:45px;top:210px">-0.8125</div>
<div class="abs" style="left:0;top:263px;width:933px;height:1px;background:#c6c6c6"></div>
<div class="abs ix" style="left:16px;top:239px">7</div>
<div class="abs cv" style="right:813px;top:239px">0.7000</div>
<div class="abs cv" style="right:717px;top:239px">-0.7638</div>
<div class="abs cv" style="right:621px;top:239px">0.1640</div>
<div class="abs cv" style="right:525px;top:239px">0.2632</div>
<div class="abs cv" style="right:429px;top:239px">0.2633</div>
<div class="abs cv" style="right:333px;top:239px">-0.9562</div>
<div class="abs cv" style="right:237px;top:239px">-0.5628</div>
<div class="abs cv" style="right:141px;top:239px">0.6646</div>
<div class="abs cv" style="right:45px;top:239px">0.5265</div>
<div class="abs" style="left:0;top:292px;width:933px;height:1px;background:#c6c6c6"></div>
<div class="abs ix" style="left:16px;top:268px">8</div>
<div class="abs cv" style="right:813px;top:268px">0.8000</div>
<div class="abs cv" style="right:717px;top:268px">-0.3522</div>
<div class="abs cv" style="right:621px;top:268px">0.5294</div>
<div class="abs cv" style="right:525px;top:268px">1.6791</div>
<div class="abs cv" style="right:429px;top:268px">-0.4578</div>
<div class="abs cv" style="right:333px;top:268px">0.3257</div>
<div class="abs cv" style="right:237px;top:268px">0.2710</div>
<div class="abs cv" style="right:141px;top:268px">0.2333</div>
<div class="abs cv" style="right:45px;top:268px">-0.7833</div>
<div class="abs" style="left:0;top:321px;width:933px;height:1px;background:#c6c6c6"></div>
<div class="abs ix" style="left:16px;top:297px">9</div>
<div class="abs cv" style="right:813px;top:297px">0.9000</div>
<div class="abs cv" style="right:717px;top:297px">-2.0360</div>
<div class="abs cv" style="right:621px;top:297px">2.4705</div>
<div class="abs cv" style="right:525px;top:297px">2.6533</div>
<div class="abs cv" style="right:429px;top:297px">-0.0143</div>
<div class="abs cv" style="right:333px;top:297px">1.4064</div>
<div class="abs cv" style="right:237px;top:297px">-0.0850</div>
<div class="abs cv" style="right:141px;top:297px">2.3408</div>
<div class="abs cv" style="right:45px;top:297px">-0.6601</div>
<div class="abs" style="left:0;top:350px;width:933px;height:1px;background:#c6c6c6"></div>
<div class="abs ix" style="left:16px;top:326px">10</div>
<div class="abs cv" style="right:813px;top:326px">1.0000</div>
<div class="abs cv" style="right:717px;top:326px">0.0822</div>
<div class="abs cv" style="right:621px;top:326px">1.7299</div>
<div class="abs cv" style="right:525px;top:326px">-0.6139</div>
<div class="abs cv" style="right:429px;top:326px">-0.2397</div>
<div class="abs cv" style="right:333px;top:326px">0.2224</div>
<div class="abs cv" style="right:237px;top:326px">-0.7870</div>
<div class="abs cv" style="right:141px;top:326px">1.0822</div>
<div class="abs cv" style="right:45px;top:326px">-0.8664</div>
<div class="abs" style="left:0;top:379px;width:933px;height:1px;background:#c6c6c6"></div>
<div class="abs ix" style="left:16px;top:355px">11</div>
<div class="abs cv" style="right:813px;top:355px">1.1000</div>
<div class="abs cv" style="right:717px;top:355px">-1.0185</div>
<div class="abs cv" style="right:621px;top:355px">0.9551</div>
<div class="abs cv" style="right:525px;top:355px">-0.5795</div>
<div class="abs cv" style="right:429px;top:355px">-1.1884</div>
<div class="abs cv" style="right:333px;top:355px">-0.6676</div>
<div class="abs cv" style="right:237px;top:355px">0.0498</div>
<div class="abs cv" style="right:141px;top:355px">-0.0962</div>
<div class="abs cv" style="right:45px;top:355px">1.2341</div>
<div class="abs" style="left:0;top:408px;width:933px;height:1px;background:#c6c6c6"></div>
<div class="abs ix" style="left:16px;top:384px">12</div>
<div class="abs cv" style="right:813px;top:384px">1.2000</div>
<div class="abs cv" style="right:717px;top:384px">0.0738</div>
<div class="abs cv" style="right:621px;top:384px">-0.0935</div>
<div class="abs cv" style="right:525px;top:384px">1.8483</div>
<div class="abs cv" style="right:429px;top:384px">-1.8867</div>
<div class="abs cv" style="right:333px;top:384px">-1.0689</div>
<div class="abs cv" style="right:237px;top:384px">-0.8058</div>
<div class="abs cv" style="right:141px;top:384px">1.1899</div>
<div class="abs cv" style="right:45px;top:384px">0.7883</div>
<div class="abs" style="left:0;top:437px;width:933px;height:1px;background:#c6c6c6"></div>
<div class="abs ix" style="left:16px;top:413px">13</div>
<div class="abs cv" style="right:813px;top:413px">1.3000</div>
<div class="abs cv" style="right:717px;top:413px">0.1359</div>
<div class="abs cv" style="right:621px;top:413px">0.1353</div>
<div class="abs cv" style="right:525px;top:413px">0.1924</div>
<div class="abs cv" style="right:429px;top:413px">0.4451</div>
<div class="abs cv" style="right:333px;top:413px">0.5066</div>
<div class="abs cv" style="right:237px;top:413px">0.2463</div>
<div class="abs cv" style="right:141px;top:413px">0.3101</div>
<div class="abs cv" style="right:45px;top:413px">-0.6194</div>
<div class="abs" style="left:0;top:466px;width:933px;height:1px;background:#c6c6c6"></div>
<div class="abs ix" style="left:16px;top:442px">14</div>
<div class="abs cv" style="right:813px;top:442px">1.4000</div>
<div class="abs cv" style="right:717px;top:442px">0.0342</div>
<div class="abs cv" style="right:621px;top:442px">-0.6451</div>
<div class="abs cv" style="right:525px;top:442px">-0.5394</div>
<div class="abs cv" style="right:429px;top:442px">0.9533</div>
<div class="abs cv" style="right:333px;top:442px">1.0072</div>
<div class="abs cv" style="right:237px;top:442px">-0.7866</div>
<div class="abs cv" style="right:141px;top:442px">0.8827</div>
<div class="abs cv" style="right:45px;top:442px">0.0391</div>
<div class="abs" style="left:0;top:495px;width:933px;height:1px;background:#c6c6c6"></div>
<div class="abs ix" style="left:16px;top:471px">15</div>
<div class="abs cv" style="right:813px;top:471px">1.5000</div>
<div class="abs cv" style="right:717px;top:471px">3.0737</div>
<div class="abs cv" style="right:621px;top:471px">-0.9739</div>
<div class="abs cv" style="right:525px;top:471px">1.1286</div>
<div class="abs cv" style="right:429px;top:471px">-0.2078</div>
<div class="abs cv" style="right:333px;top:471px">2.6723</div>
<div class="abs cv" style="right:237px;top:471px">-0.7899</div>
<div class="abs cv" style="right:141px;top:471px">-1.1441</div>
<div class="abs cv" style="right:45px;top:471px">-1.6246</div>
<div class="abs" style="left:0;top:524px;width:933px;height:1px;background:#c6c6c6"></div>
<div class="abs ix" style="left:16px;top:500px">16</div>
<div class="abs cv" style="right:813px;top:500px">1.6000</div>
<div class="abs cv" style="right:717px;top:500px">-0.5381</div>
<div class="abs cv" style="right:621px;top:500px">0.3247</div>
<div class="abs cv" style="right:525px;top:500px">-0.4051</div>
<div class="abs cv" style="right:429px;top:500px">-1.5299</div>
<div class="abs cv" style="right:333px;top:500px">1.4787</div>
<div class="abs cv" style="right:237px;top:500px">1.2452</div>
<div class="abs cv" style="right:141px;top:500px">0.8613</div>
<div class="abs cv" style="right:45px;top:500px">-1.4084</div>
<div class="abs" style="left:0;top:553px;width:933px;height:1px;background:#c6c6c6"></div>
<div class="abs ix" style="left:16px;top:529px">17</div>
<div class="abs cv" style="right:813px;top:529px">1.7000</div>
<div class="abs cv" style="right:717px;top:529px">-0.8251</div>
<div class="abs cv" style="right:621px;top:529px">-0.5520</div>
<div class="abs cv" style="right:525px;top:529px">0.4209</div>
<div class="abs cv" style="right:429px;top:529px">0.6592</div>
<div class="abs cv" style="right:333px;top:529px">0.3774</div>
<div class="abs cv" style="right:237px;top:529px">0.1121</div>
<div class="abs cv" style="right:141px;top:529px">0.3486</div>
<div class="abs cv" style="right:45px;top:529px">-0.8580</div>
<div class="abs" style="left:0;top:582px;width:933px;height:1px;background:#c6c6c6"></div>
<div class="abs ix" style="left:16px;top:558px">18</div>
<div class="abs cv" style="right:813px;top:558px">1.8000</div>
<div class="abs cv" style="right:717px;top:558px">-0.1462</div>
<div class="abs cv" style="right:621px;top:558px">0.1964</div>
<div class="abs cv" style="right:525px;top:558px">-0.5371</div>
<div class="abs cv" style="right:429px;top:558px">-1.1394</div>
<div class="abs cv" style="right:333px;top:558px">-1.0846</div>
<div class="abs cv" style="right:237px;top:558px">-0.5909</div>
<div class="abs cv" style="right:141px;top:558px">0.8833</div>
<div class="abs cv" style="right:45px;top:558px">1.0156</div>
<div class="abs" style="left:0;top:611px;width:933px;height:1px;background:#c6c6c6"></div>
<div class="abs ix" style="left:16px;top:587px">19</div>
<div class="abs cv" style="right:813px;top:587px">1.9000</div>
<div class="abs cv" style="right:717px;top:587px">1.4527</div>
<div class="abs cv" style="right:621px;top:587px">1.2053</div>
<div class="abs cv" style="right:525px;top:587px">-0.3871</div>
<div class="abs cv" style="right:429px;top:587px">-0.6705</div>
<div class="abs cv" style="right:333px;top:587px">0.1081</div>
<div class="abs cv" style="right:237px;top:587px">0.9705</div>
<div class="abs cv" style="right:141px;top:587px">-0.1894</div>
<div class="abs cv" style="right:45px;top:587px">1.0937</div>
<div class="abs" style="left:0;top:640px;width:933px;height:1px;background:#c6c6c6"></div>
<div class="abs ix" style="left:16px;top:616px">20</div>
<div class="abs cv" style="right:813px;top:616px">2.0000</div>
<div class="abs cv" style="right:717px;top:616px">1.2877</div>
<div class="abs cv" style="right:621px;top:616px">-1.8921</div>
<div class="abs cv" style="right:525px;top:616px">1.2132</div>
<div class="abs cv" style="right:429px;top:616px">-0.1086</div>
<div class="abs cv" style="right:333px;top:616px">0.0855</div>
<div class="abs cv" style="right:237px;top:616px">0.4372</div>
<div class="abs cv" style="right:141px;top:616px">0.2893</div>
<div class="abs cv" style="right:45px;top:616px">2.9296</div>
<div class="abs" style="left:0;top:669px;width:933px;height:1px;background:#c6c6c6"></div>
<div class="abs ix" style="left:16px;top:645px">21</div>
<div class="abs cv" style="right:813px;top:645px">2.1000</div>
<div class="abs cv" style="right:717px;top:645px">-1.0547</div>
<div class="abs cv" style="right:621px;top:645px">-1.1443</div>
<div class="abs cv" style="right:525px;top:645px">1.2745</div>
<div class="abs cv" style="right:429px;top:645px">1.5115</div>
<div class="abs cv" style="right:333px;top:645px">0.9516</div>
<div class="abs cv" style="right:237px;top:645px">-0.2585</div>
<div class="abs cv" style="right:141px;top:645px">0.1589</div>
<div class="abs cv" style="right:45px;top:645px">0.1561</div>
</div>
<div class="abs" style="left:314px;top:883px;width:942px;height:8px;background:#ebebeb;border-radius:0 0 6px 6px"></div>
<div class="abs" style="left:316px;top:884px;width:792px;height:6px;border-radius:3px;background:#6f7378"></div>
<div class="abs" style="left:1248px;top:227px;width:8px;height:664px;background:#efefef;border-radius:0 6px 6px 0"></div>
<div class="abs" style="left:1249px;top:228px;width:6px;height:287px;border-radius:3px;background:#6f7378"></div>

<div class="abs" style="left:310px;top:896px;width:951px;height:1px;background:#bcbcbc"></div>
<div class="abs t14m" style="left:318px;top:913px">Rows per page</div>
<div class="abs" style="left:424px;top:905px;width:70px;height:36px;border:1px solid #222;border-radius:6px"></div>
<div class="abs" style="left:436px;top:913px;font-size:14px;line-height:20px;color:#111">50</div>
<svg class="abs" style="left:466px;top:919px" width="12" height="8" viewBox="0 0 12 8"><path d="M2 2l4 4 4-4" fill="none" stroke="#999" stroke-width="1.2"/></svg>
<div class="abs" style="left:502px;top:913px;font-size:14px;line-height:20px;color:#8c8c8c">Showing 1 to 50 of 1000 entries</div>
<div class="abs t14m" style="left:979px;top:913px">Page 1 of 20</div>

<div class="abs" style="left:1101px;top:907px;width:32px;height:32px;border:1px solid #858585;border-radius:7px;background:#d9d9d9"><svg class="abs" style="left:7px;top:7px" width="16" height="16" viewBox="0 0 16 16"><path d="M7.8 5L5 7.8l2.8 2.8M11.2 5L8.4 7.8l2.8 2.8" fill="none" stroke="#6a6a6a" stroke-width="1.5" stroke-linecap="round" stroke-linejoin="round"/></svg></div>
<div class="abs" style="left:1141px;top:907px;width:32px;height:32px;border:1px solid #858585;border-radius:7px;background:#d9d9d9"><svg class="abs" style="left:7px;top:7px" width="16" height="16" viewBox="0 0 16 16"><path d="M9.3 4.3L6.3 7.8l3 3.5" fill="none" stroke="#6a6a6a" stroke-width="1.5" stroke-linecap="round" stroke-linejoin="round"/></svg></div>
<div class="abs" style="left:1181px;top:907px;width:32px;height:32px;border:1px solid #161616;border-radius:7px;background:#ebebeb"><svg class="abs" style="left:7px;top:7px" width="16" height="16" viewBox="0 0 16 16"><path d="M6.7 4.3L9.7 7.8l-3 3.5" fill="none" stroke="#111" stroke-width="1.5" stroke-linecap="round" stroke-linejoin="round"/></svg></div>
<div class="abs" style="left:1221px;top:907px;width:32px;height:32px;border:1px solid #161616;border-radius:7px;background:#ebebeb"><svg class="abs" style="left:7px;top:7px" width="16" height="16" viewBox="0 0 16 16"><path d="M4.8 5l2.8 2.8-2.8 2.8M8.2 5l2.8 2.8-2.8 2.8" fill="none" stroke="#111" stroke-width="1.5" stroke-linecap="round" stroke-linejoin="round"/></svg></div>
</div>
</div></body></html>
